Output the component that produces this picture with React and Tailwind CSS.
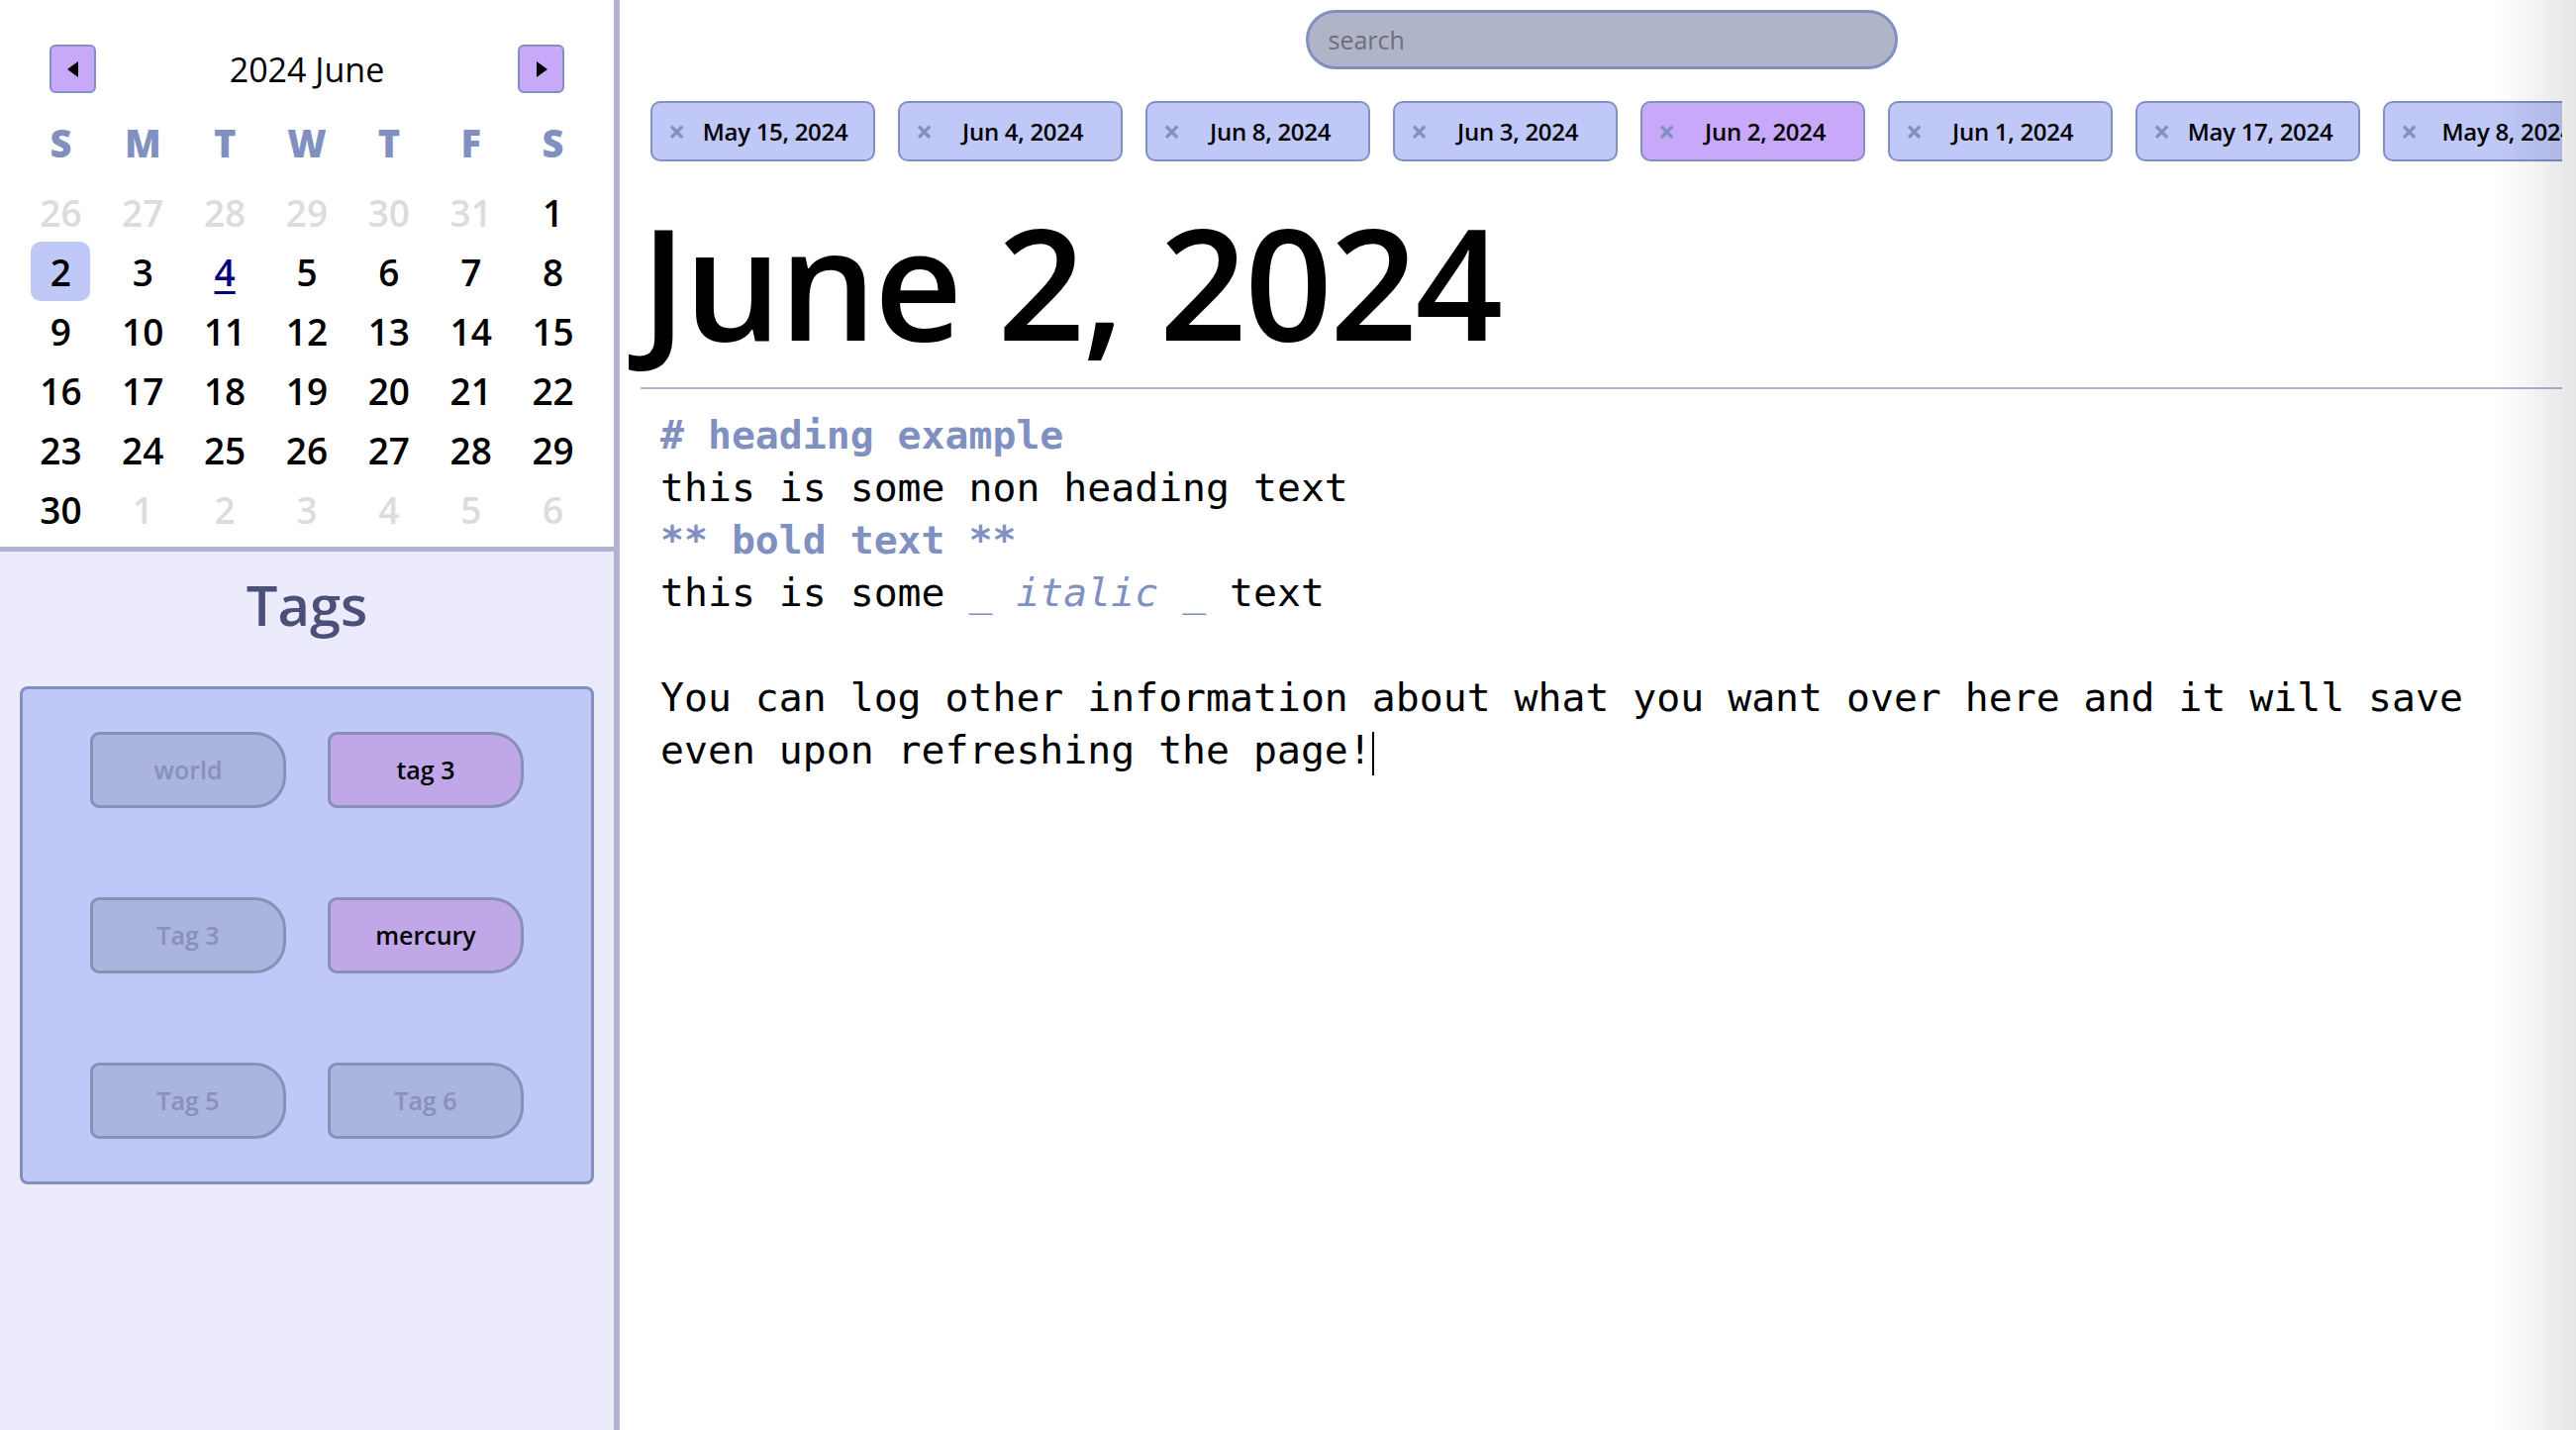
import React, { useState } from 'react';

const SANS = { fontFamily: '"Open Sans", "Noto Sans", sans-serif' };

const weekDays = ['S', 'M', 'T', 'W', 'T', 'F', 'S'];

const buildDays = () => {
    const days = [];
    [26, 27, 28, 29, 30, 31].forEach((d) => days.push({ d, muted: true }));
    for (let d = 1; d <= 30; d++) days.push({ d, muted: false });
    [1, 2, 3, 4, 5, 6].forEach((d) => days.push({ d, muted: true }));
    return days;
};

const tabs = [
    'May 15, 2024',
    'Jun 4, 2024',
    'Jun 8, 2024',
    'Jun 3, 2024',
    'Jun 2, 2024',
    'Jun 1, 2024',
    'May 17, 2024',
    'May 8, 2024',
];

const tags = [
    { name: 'world', active: false },
    { name: 'tag 3', active: true },
    { name: 'Tag 3', active: false },
    { name: 'mercury', active: true },
    { name: 'Tag 5', active: false },
    { name: 'Tag 6', active: false },
];

const Calendar = () => {
    const days = buildDays();
    return (
        <div className="h-[552px] bg-white px-[20px] pt-[45px]" style={SANS}>
            <div className="flex items-center justify-between px-[30px]">
                <button className="flex h-[49px] w-[47px] items-center justify-center rounded-[6px] border-2 border-[#8090c0] bg-[#c8a8f8]">
                    <svg width="12" height="16" viewBox="0 0 12 16"><polygon points="11,0 11,16 0,8" fill="#000" /></svg>
                </button>
                <div className="text-[34px] leading-none text-black">2024 June</div>
                <button className="flex h-[49px] w-[47px] items-center justify-center rounded-[6px] border-2 border-[#8090c0] bg-[#c8a8f8]">
                    <svg width="12" height="16" viewBox="0 0 12 16"><polygon points="1,0 1,16 12,8" fill="#000" /></svg>
                </button>
            </div>
            <div className="mt-[20px] grid grid-cols-7">
                {weekDays.map((w, i) => (
                    <div key={i} className="flex h-[60px] items-center justify-center text-[38px] font-extrabold leading-none text-[#8090c0]">{w}</div>
                ))}
            </div>
            <div className="mt-[10px] grid grid-cols-7">
                {days.map((day, i) => {
                    const selected = !day.muted && day.d === 2;
                    const linked = !day.muted && day.d === 4;
                    let color = 'text-black';
                    if (day.muted) color = 'text-[#dcdcdc]';
                    if (linked) color = 'text-[#000080] font-bold underline decoration-[3px] underline-offset-[5px]';
                    return (
                        <div key={i} className="flex h-[60px] items-center justify-center">
                            <div
                                className={
                                    'flex h-[60px] w-[60px] items-center justify-center rounded-[10px] text-[37px] font-semibold leading-none ' +
                                    (selected ? 'bg-[#c0c8f8] ' : '') +
                                    color
                                }
                            >
                                {day.d}
                            </div>
                        </div>
                    );
                })}
            </div>
        </div>
    );
};

const Tags = () => (
    <div className="flex-1 bg-[#ebebfc] px-[20px] pt-[20px]" style={SANS}>
        <h2 className="text-center text-[56px] font-semibold leading-[1.2] text-[#4a5078]">Tags</h2>
        <div className="mt-[49px] grid grid-cols-[198px_198px] justify-center gap-x-[42px] gap-y-[90px] rounded-[8px] border-[3px] border-[#8090c0] bg-[#c0c8f8] py-[43px]">
            {tags.map((t, i) => (
                <div
                    key={i}
                    className={
                        'flex h-[77px] items-center justify-center rounded-l-[9px] rounded-r-[32px] border-[3px] border-[#8890b8] text-[25px] font-semibold ' +
                        (t.active ? 'bg-[#c0a8e8] text-black' : 'bg-[#aab4dc] text-[#8890b8]')
                    }
                >
                    {t.name}
                </div>
            ))}
        </div>
    </div>
);

const Editor = () => (
    <div className="px-[20px] pt-[20px] text-[39.8px] leading-[53px] text-black" style={{ fontFamily: '"DejaVu Sans Mono", "Liberation Mono", monospace' }}>
        <div className="font-bold text-[#8090c0]"># heading example</div>
        <div>this is some non heading text</div>
        <div className="font-bold text-[#8090c0]">** bold text **</div>
        <div>
            this is some <span className="text-[#8090c0]">_ <span className="italic">italic</span> _</span> text
        </div>
        <div>&nbsp;</div>
        <div>
            You can log other information about what you want over here and it will save even upon refreshing the page!
            <span className="inline-block h-[44px] w-[2px] bg-black align-middle" />
        </div>
    </div>
);

export default function App() {
    const [active] = useState('Jun 2, 2024');
    return (
        <div className="flex h-screen w-full overflow-hidden bg-white">
            <aside className="flex w-[626px] shrink-0 flex-col border-r-[6px] border-[#b0b4d0]">
                <Calendar />
                <div className="h-[5px] bg-[#b0b4d0]" />
                <Tags />
            </aside>
            <main className="relative flex-1 overflow-hidden pl-[21px] pr-[14px]">
                <div className="flex justify-center pt-[10px]">
                    <input
                        placeholder="search"
                        className="h-[60px] w-[598px] rounded-full border-[3px] border-[#8090c0] bg-[#b0b4c8] px-[20px] text-[25px] text-black outline-none placeholder:text-[#6e6e7a]"
                        style={SANS}
                    />
                </div>
                <div className="mt-[32px] flex gap-[23px] overflow-hidden pl-[10px]" style={SANS}>
                    {tabs.map((t) => (
                        <div
                            key={t}
                            className={
                                'flex h-[61px] w-[227px] shrink-0 items-center rounded-[10px] border-2 border-[#8090c0] pl-[16px] pr-[8px] ' +
                                (t === active ? 'bg-[#c8a8f8]' : 'bg-[#c0c8f8]')
                            }
                        >
                            <span className="text-[30px] font-bold leading-none text-[#8090c0]">×</span>
                            <span className="flex-1 text-center text-[24px] font-semibold tracking-[-0.3px] text-black">{t}</span>
                        </div>
                    ))}
                </div>
                <h1 className="mt-[43px] h-[155px] text-[155px] leading-none font-semibold tracking-[-2.5px] text-black" style={SANS}>June 2, 2024</h1>
                <div className="mt-[30px] h-[2px] bg-[#b0b4d0]" />
                <Editor />
                <div className="pointer-events-none absolute right-0 top-0 h-full w-[80px] bg-linear-to-r from-transparent to-black/10" />
            </main>
        </div>
    );
}
